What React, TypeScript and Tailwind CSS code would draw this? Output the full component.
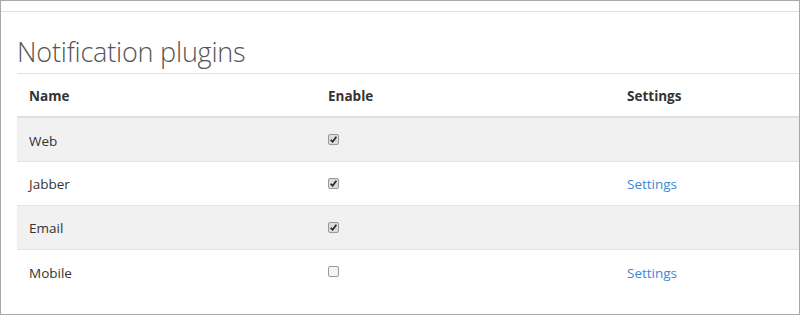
import React from 'react';

interface Plugin {
  name: string;
  enabled: boolean;
  hasSettings: boolean;
}

const plugins: Plugin[] = [
  { name: 'Web', enabled: true, hasSettings: false },
  { name: 'Jabber', enabled: true, hasSettings: true },
  { name: 'Email', enabled: true, hasSettings: false },
  { name: 'Mobile', enabled: false, hasSettings: true },
];

const CheckBox: React.FC<{ checked: boolean }> = ({ checked }) => (
  <span
    className={`inline-flex items-center justify-center w-[11px] h-[11px] rounded-[2px] border border-[#9a9a9a] ${
      checked ? 'bg-[#dcdcdc]' : 'bg-[#f4f4f4]'
    }`}
  >
    {checked && (
      <svg width="9" height="9" viewBox="0 0 9 9">
        <path d="M1.6 4.8 L3.6 6.8 L7.4 1.8" fill="none" stroke="#222" strokeWidth="1.6" />
      </svg>
    )}
  </span>
);

const App: React.FC = () => {
  return (
    <div
      className="w-[800px] h-[315px] border border-[#a8a8a8] bg-white overflow-hidden"
      style={{ fontFamily: '"Open Sans", "Noto Sans", sans-serif' }}
    >
      <div className="h-[11px] border-b border-[#dedede]" />
      <div className="pl-[16px]">
        {/* Header */}
        <div className="h-[62px] flex items-end pb-[8px] border-b border-[#e2e2e2]">
          <h1 className="text-[27px] font-light text-[#555] leading-none tracking-[-0.2px]">
            Notification plugins
          </h1>
        </div>

        {/* Table */}
        <table className="w-full border-collapse text-[13.5px] text-[#333]">
          <thead>
            <tr className="h-[43px] border-b-2 border-[#dde1e4]">
              <th className="w-[299px] px-3 pt-[3px] text-left font-bold align-middle">Name</th>
              <th className="w-[299px] px-3 pt-[3px] text-left font-bold align-middle">Enable</th>
              <th className="px-3 pt-[3px] text-left font-bold align-middle">Settings</th>
            </tr>
          </thead>
          <tbody>
            {plugins.map((p, i) => (
              <tr
                key={p.name}
                className={`h-[44px] border-t border-[#e4e4e4] ${i % 2 === 0 ? 'bg-[#f1f1f1]' : 'bg-white'}`}
              >
                <td className="px-3 pt-[3px] align-middle">{p.name}</td>
                <td className="px-3 align-middle">
                  <span className="flex items-center pt-[1px]">
                    <CheckBox checked={p.enabled} />
                  </span>
                </td>
                <td className="px-3 pt-[3px] align-middle">
                  {p.hasSettings && (
                    <a href="#" className="text-[#3c87d6]">
                      Settings
                    </a>
                  )}
                </td>
              </tr>
            ))}
          </tbody>
        </table>
      </div>
    </div>
  );
};

export default App;
